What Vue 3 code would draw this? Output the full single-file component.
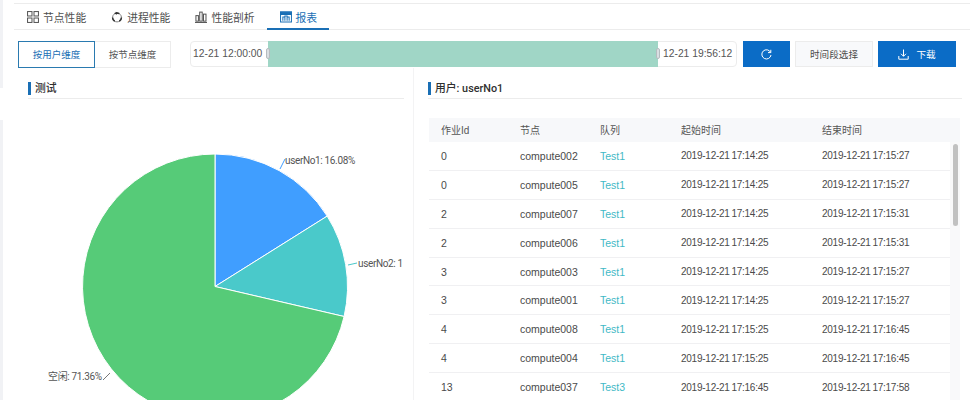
<script setup>
const tabs = [
  { name: "节点性能", icon: "grid" },
  { name: "进程性能", icon: "cycle" },
  { name: "性能剖析", icon: "bars" },
  { name: "报表", icon: "report", active: true }
]

const rows = [
  ["0", "compute002", "Test1", "2019-12-21 17:14:25", "2019-12-21 17:15:27"],
  ["0", "compute005", "Test1", "2019-12-21 17:14:25", "2019-12-21 17:15:27"],
  ["2", "compute007", "Test1", "2019-12-21 17:14:25", "2019-12-21 17:15:31"],
  ["2", "compute006", "Test1", "2019-12-21 17:14:25", "2019-12-21 17:15:31"],
  ["3", "compute003", "Test1", "2019-12-21 17:14:25", "2019-12-21 17:15:27"],
  ["3", "compute001", "Test1", "2019-12-21 17:14:25", "2019-12-21 17:15:27"],
  ["4", "compute008", "Test1", "2019-12-21 17:15:25", "2019-12-21 17:16:45"],
  ["4", "compute004", "Test1", "2019-12-21 17:15:25", "2019-12-21 17:16:45"],
  ["13", "compute037", "Test3", "2019-12-21 17:16:45", "2019-12-21 17:17:58"]
]
</script>

<template>
  <div class="page">
    <!-- left edge of the shell -->
    <div class="edge">
      <div class="edge-top"></div>
      <div class="edge-gap"></div>
      <div class="edge-bottom"></div>
    </div>

    <div class="main">
      <!-- TABS -->
      <div class="tabs">
        <div v-for="t in tabs" :key="t.name" class="tab" :class="{ active: t.active }">
          <svg v-if="t.icon === 'grid'" class="tab-icon" viewBox="0 0 13 13" fill="none" stroke="#555" stroke-width="1.1">
            <rect x="0.6" y="0.6" width="4.8" height="4.8" />
            <rect x="7.6" y="0.6" width="4.8" height="4.8" />
            <rect x="0.6" y="7.6" width="4.8" height="4.8" />
            <rect x="7.6" y="7.6" width="4.8" height="4.8" />
          </svg>
          <svg v-else-if="t.icon === 'cycle'" class="tab-icon" viewBox="0 0 13 13" fill="none" stroke="#777" stroke-width="1">
            <circle cx="6.5" cy="7" r="4.8" />
            <path d="M4 2.9A4.8 4.8 0 0 1 9 2.9" stroke="#333" stroke-width="1.5" />
            <path d="M11.3 7A4.8 4.8 0 0 1 9 11.1" stroke="#333" stroke-width="1.6" />
            <path d="M4 11.1A4.8 4.8 0 0 1 1.7 7" stroke="#333" stroke-width="1.6" />
            <path d="M5.2 0.8L8 2.4L5.6 4Z" fill="#333" stroke="none" />
          </svg>
          <svg v-else-if="t.icon === 'bars'" class="tab-icon" viewBox="0 0 13 13" fill="none" stroke="#555" stroke-width="1.1">
            <rect x="1" y="5" width="2.7" height="6" />
            <rect x="5.1" y="1.2" width="2.7" height="9.8" />
            <rect x="9.2" y="3.4" width="2.7" height="7.6" />
            <path d="M0 12.5H13" />
          </svg>
          <svg v-else class="tab-icon" viewBox="0 0 13 13" fill="none" stroke="#1a6fb5" stroke-width="1.1">
            <path d="M0.6 1.2H12.4V11.8H0.6Z" />
            <path d="M0.6 3.8H12.4V1.2H0.6Z" fill="#1a6fb5" />
            <path d="M3.1 10.5V6.5H5.3V10.5M5.3 10.5V5.5H7.7V10.5M7.7 10.5V6.5H9.9V10.5" />
          </svg>
          <span>{{ t.name }}</span>
        </div>
      </div>

      <!-- TOOLBAR -->
      <div class="toolbar">
        <div class="dim-group">
          <div class="dim on">按用户维度</div>
          <div class="dim">按节点维度</div>
        </div>

        <div class="timeline">
          <span class="time">12-21 12:00:00</span>
          <div class="range">
            <i class="handle left"></i>
            <i class="handle right"></i>
          </div>
          <span class="time end">12-21 19:56:12</span>
        </div>

        <button class="btn primary refresh">
          <svg width="11" height="11" viewBox="0 0 11 11" fill="none" stroke="#fff" stroke-width="1">
            <path d="M9.6 3.4A4.6 4.6 0 1 0 10 6" />
            <path d="M9.8 0.8V3.6H7" />
          </svg>
        </button>
        <button class="btn plain">时间段选择</button>
        <button class="btn primary download">
          <svg width="11" height="11" viewBox="0 0 11 11" fill="none" stroke="#fff" stroke-width="1">
            <path d="M5.5 0.5V7.2M3 4.8L5.5 7.3L8 4.8" />
            <path d="M0.8 7V10.2H10.2V7" />
          </svg>
          <span>下载</span>
        </button>
      </div>

      <div class="panels">
        <!-- PIE -->
        <section class="panel-left">
          <div class="title"><h3>测试</h3></div>
          <svg class="pie" viewBox="3 99 404 301" width="404" height="301">
            <path d="M215 286.5L215 154A132.5 132.5 0 0 1 327.2 216.1Z" fill="#409eff" stroke="#fff" />
            <path d="M215 286.5L327.2 216.1A132.5 132.5 0 0 1 344.1 316.5Z" fill="#4ac9ca" stroke="#fff" />
            <path d="M215 286.5L344.1 316.5A132.5 132.5 0 1 1 215 154Z" fill="#56cb78" stroke="#fff" />
            <path d="M280 169L285 159" stroke="#409eff" fill="none" />
            <path d="M348 265L357 263" stroke="#4ac9ca" fill="none" />
            <path d="M103 380L110 373" stroke="#777" fill="none" />
            <text x="285" y="164" class="lbl">userNo1: 16.08%</text>
            <text x="358" y="267" class="lbl">userNo2: 1</text>
            <text x="48" y="380" class="lbl">空闲: 71.36%</text>
          </svg>
        </section>

        <!-- TABLE -->
        <section class="panel-right">
          <div class="title"><h3>用户: userNo1</h3></div>
          <div class="table">
            <div class="row head">
              <span>作业Id</span>
              <span>节点</span>
              <span>队列</span>
              <span>起始时间</span>
              <span>结束时间</span>
            </div>
            <div class="body">
              <div class="rows">
                <div v-for="(r, i) in rows" :key="i" class="row">
                  <span>{{ r[0] }}</span>
                  <span>{{ r[1] }}</span>
                  <span class="queue">{{ r[2] }}</span>
                  <span class="date">{{ r[3] }}</span>
                  <span class="date">{{ r[4] }}</span>
                </div>
              </div>
              <div class="track"><div class="thumb"></div></div>
            </div>
          </div>
        </section>
      </div>
    </div>
  </div>
</template>

<style scoped>
.page {
  display: flex;
  width: 970px;
  height: 400px;
  overflow: hidden;
  background: #fff;
  color: #4a4a4a;
  font-family: "Liberation Sans", "Noto Sans CJK SC", sans-serif;
}

.edge {
  display: flex;
  flex-direction: column;
  width: 3px;
  flex: none;
}

.edge-top {
  height: 88px;
  background: #f1f2f5;
}

.edge-gap {
  height: 32px;
}

.edge-bottom {
  flex: 1;
  background: #f1f2f5;
}

.main {
  flex: 1;
  min-width: 0;
  display: flex;
  flex-direction: column;
}

.tabs {
  display: flex;
  height: 25px;
  margin: 3px 0 0 11px;
  border-top: 1px solid #ececec;
  border-bottom: 1px solid #ececec;
}

.tab {
  display: flex;
  align-items: center;
  gap: 4px;
  height: 26px;
  box-sizing: border-box;
  padding: 0 12px 1px 13px;
  font-size: 10.8px;
  color: #4f4f4f;
}

.tab.active {
  color: #1a6fb5;
  border-bottom: 2px solid #1a6fb5;
  padding-top: 1px;
  padding-bottom: 0;
}

.tab-icon {
  width: 12px;
  height: 12px;
  flex: none;
}

.toolbar {
  display: flex;
  align-items: flex-start;
  height: 27px;
  margin: 11px 0 0 15px;
}

.dim-group {
  display: flex;
  margin-right: 19px;
}

.dim {
  width: 76px;
  height: 27px;
  box-sizing: border-box;
  border: 1px solid #ececec;
  border-left: none;
  font-size: 9.5px;
  line-height: 25px;
  text-align: center;
  color: #555;
}

.dim.on {
  width: 77px;
  border: 1px solid #2a7ab0;
  color: #1a6fb5;
}

.timeline {
  display: flex;
  width: 547px;
  height: 26px;
  box-sizing: border-box;
  border: 1px solid #ececec;
  border-radius: 4px;
  margin-right: 6px;
}

.time {
  width: 77px;
  flex: none;
  padding-left: 2px;
  box-sizing: border-box;
  font-size: 10.3px;
  line-height: 24px;
  color: #555;
  white-space: nowrap;
}

.time.end {
  width: 78px;
  padding-left: 5px;
}

.range {
  position: relative;
  flex: 1;
  margin: -1px 0;
  background: #a0d6c6;
}

.handle {
  position: absolute;
  top: 7px;
  width: 4px;
  height: 11px;
  box-sizing: border-box;
  border: 1px solid #b5bcc0;
  border-radius: 2px;
  background: #d9dfe2;
}

.handle.left {
  left: -2px;
}

.handle.right {
  right: -2px;
}

.btn {
  display: flex;
  align-items: center;
  justify-content: center;
  height: 26px;
  padding: 0;
  border: none;
  font-family: inherit;
  font-size: 9.6px;
}

.primary {
  background: #0b6cc6;
  color: #fff;
}

.refresh {
  width: 47px;
  margin-right: 5px;
}

.plain {
  width: 78px;
  margin-right: 5px;
  box-sizing: border-box;
  border: 1px solid #ececec;
  background: #f8f9fb;
  color: #4a4a4a;
}

.download {
  width: 78px;
  gap: 7px;
}

.panels {
  flex: 1;
  min-height: 0;
  display: flex;
}

.panel-left {
  width: 411px;
  flex: none;
  border-right: 1.5px solid #f3f3f4;
  box-sizing: border-box;
}

.panel-right {
  flex: 1;
  min-width: 0;
  padding-left: 14px;
}

.title {
  margin: 14px 8px 0 0;
  padding-bottom: 3px;
  border-bottom: 1px solid #ececec;
}

.panel-left .title {
  margin-left: 25px;
  margin-right: 9px;
}

.title h3 {
  height: 13px;
  margin: 0;
  padding-left: 4px;
  border-left: 3px solid #1a6fb5;
  font-family: Roboto, "Noto Sans CJK SC", sans-serif;
  font-size: 10.8px;
  font-weight: 500;
  line-height: 14px;
  color: #2f2f2f;
}

.pie {
  display: block;
}

.lbl {
  font-family: Roboto, "Noto Sans CJK SC", sans-serif;
  font-size: 10px;
  letter-spacing: -0.35px;
  fill: #555;
}

.table {
  width: 531px;
  margin: 19px 0 0 1px;
  font-size: 10.5px;
}

.row {
  display: grid;
  grid-template-columns: 79px 80px 81px 141px 1fr;
  align-items: center;
  height: 28.9px;
  box-sizing: border-box;
  padding-left: 12px;
  border-bottom: 1px solid #f0f0f2;
  white-space: nowrap;
}

.row.head {
  height: 24px;
  padding-bottom: 2px;
  border-bottom: none;
  background: #f7f8fa;
  font-size: 10px;
  color: #555;
}

.date {
  font-size: 10px;
  letter-spacing: -0.25px;
  word-spacing: -0.8px;
}

.body {
  display: flex;
}

.rows {
  flex: 1;
  min-width: 0;
}

.queue {
  color: #3fb9c6;
}

.track {
  width: 10px;
  flex: none;
  background: #f9f9fa;
  padding: 2px 2px 0 3px;
  box-sizing: border-box;
}

.thumb {
  height: 82px;
  border-radius: 3px;
  background: #c1c1c1;
}
</style>
